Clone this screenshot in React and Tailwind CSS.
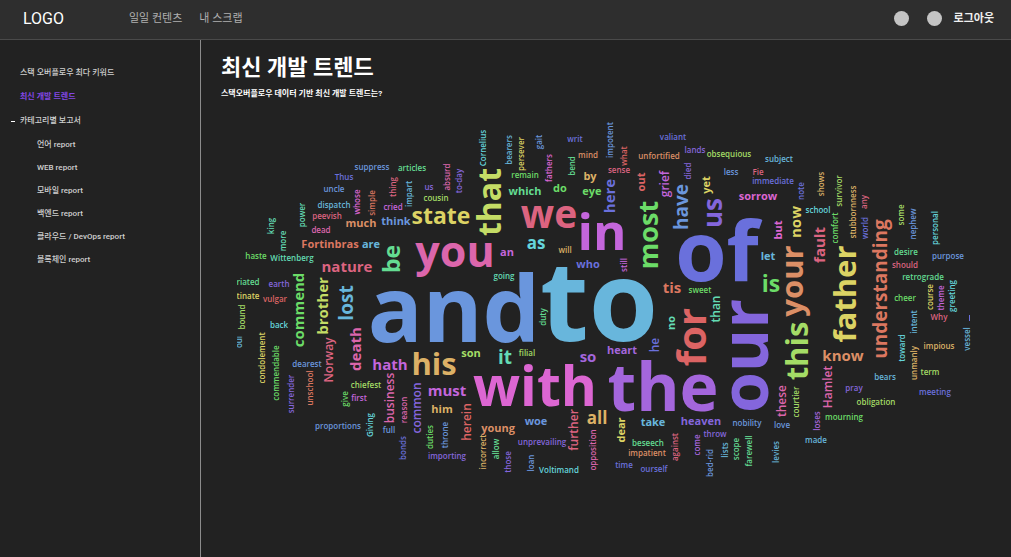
import React from 'react';

const reports = ['언어 report', 'WEB report', '모바일 report', '백엔드 report', '클라우드 / DevOps report', '블록체인 report'];

const blue = '#6a96dd';
const sky = '#68b6dc';
const cyan = '#65d5dc';
const teal = '#64dcb4';
const mint = '#64dc92';
const green = '#6cdc68';
const lime = '#a4dc66';
const yellow = '#dcd364';
const gold = '#dcb166';
const orange = '#dc8f66';
const coral = '#dc7760';
const red = '#dc6464';
const rose = '#dc6480';
const pink = '#dc66ac';
const magenta = '#dc66d2';
const orchid = '#c466dc';
const purple = '#a466dc';
const violet = '#8466dc';
const indigo = '#6a70dc';

// [word, centre x, baseline y, size, colour]
const horizontal = [
  ['and', 454, 342, 91, blue],
  ['to', 599, 341, 112, sky],
  ['of', 717, 281, 83, indigo],
  ['the', 663, 411, 66, purple],
  ['with', 535, 406, 55, magenta],
  ['you', 455, 267, 43, pink],
  ['we', 549, 228, 39, rose],
  ['in', 602, 250, 51, orchid],
  ['his', 434, 375, 31, gold],
  ['state', 441, 224, 23, yellow],
  ['nature', 347, 272, 15, rose],
  ['hath', 390, 370, 15, orchid],
  ['must', 447, 396, 15, orchid],
  ['know', 843, 361, 15, orange],
  ['as', 536, 249, 17, cyan],
  ['it', 505, 364, 19, teal],
  ['so', 588, 362, 15, purple],
  ['all', 597, 424, 17, gold],
  ['is', 771, 292, 23, green],
  ['tis', 672, 293, 15, coral],
  ['Fortinbras', 330, 248, 11, coral],
  ['are', 371, 248, 11, sky],
  ['much', 361, 227, 11, orange],
  ['think', 396, 225, 11, blue],
  ['an', 507, 256, 11, orchid],
  ['who', 588, 268, 11, indigo],
  ['which', 525, 195, 11, mint],
  ['do', 560, 192, 11, green],
  ['by', 590, 180, 11, gold],
  ['eye', 592, 195, 11, green],
  ['him', 442, 413, 11, gold],
  ['son', 471, 357, 11, lime],
  ['heart', 622, 354, 11, purple],
  ['woe', 536, 425, 11, blue],
  ['young', 498, 432, 11, orange],
  ['take', 653, 426, 11, sky],
  ['heaven', 701, 425, 11, violet],
  ['let', 768, 260, 11, sky],
  ['sorrow', 758, 200, 11, magenta],
  ['suppress', 372, 170, 8, blue],
  ['articles', 412, 171, 8, mint],
  ['Thus', 344, 180, 8, indigo],
  ['uncle', 334, 192, 8, blue],
  ['dispatch', 334, 208, 8, sky],
  ['peevish', 327, 219, 8, rose],
  ['dead', 321, 233, 8, pink],
  ['cried', 393, 210, 8, orchid],
  ['us', 429, 190, 8, violet],
  ['cousin', 436, 201, 8, lime],
  ['haste', 256, 259, 8, green],
  ['Wittenberg', 292, 261, 8, teal],
  ['riated', 248, 285, 8, mint],
  ['earth', 279, 287, 8, violet],
  ['tinate', 248, 299, 8, yellow],
  ['vulgar', 275, 302, 8, red],
  ['back', 279, 328, 8, cyan],
  ['dearest', 307, 367, 8, blue],
  ['chiefest', 366, 388, 8, lime],
  ['first', 359, 401, 8, orchid],
  ['proportions', 338, 429, 8, blue],
  ['full', 389, 433, 8, blue],
  ['importing', 447, 459, 8, violet],
  ['unprevailing', 542, 445, 8, violet],
  ['Voltimand', 559, 473, 8, cyan],
  ['filial', 527, 356, 8, lime],
  ['going', 504, 279, 8, teal],
  ['will', 565, 253, 8, gold],
  ['remain', 525, 178, 8, green],
  ['writ', 575, 142, 8, indigo],
  ['mind', 588, 158, 8, orange],
  ['sense', 619, 173, 8, rose],
  ['valiant', 673, 140, 8, indigo],
  ['lands', 695, 153, 8, violet],
  ['unfortified', 659, 159, 8, orange],
  ['obsequious', 729, 157, 8, lime],
  ['less', 731, 175, 8, blue],
  ['Fie', 758, 175, 8, rose],
  ['subject', 779, 162, 8, sky],
  ['immediate', 773, 184, 8, indigo],
  ['sweet', 700, 293, 8, green],
  ['school', 818, 213, 8, cyan],
  ['desire', 906, 255, 8, mint],
  ['should', 905, 268, 8, rose],
  ['purpose', 948, 259, 8, blue],
  ['retrograde', 923, 280, 8, mint],
  ['cheer', 905, 301, 8, green],
  ['Why', 939, 320, 8, rose],
  ['impious', 939, 349, 8, gold],
  ['bears', 885, 380, 8, sky],
  ['term', 930, 375, 8, lime],
  ['meeting', 935, 395, 8, indigo],
  ['pray', 854, 391, 8, violet],
  ['obligation', 876, 405, 8, lime],
  ['mourning', 844, 420, 8, green],
  ['made', 816, 443, 8, sky],
  ['nobility', 747, 426, 8, blue],
  ['love', 782, 428, 8, blue],
  ['throw', 715, 437, 8, violet],
  ['beseech', 648, 446, 8, mint],
  ['impatient', 647, 456, 8, orange],
  ['time', 624, 468, 8, indigo],
  ['ourself', 654, 472, 8, indigo],
];

// Words that read upwards: [word, baseline x, centre y, size, colour]
const vertical = [
  ['our', 768, 356, 66, violet],
  ['for', 706, 337, 40, red],
  ['that', 501, 202, 32, '#c4dc66'],
  ['most', 658, 235, 27, green],
  ['have', 688, 207, 19, blue],
  ['here', 615, 196, 15, indigo],
  ['us', 722, 213, 26, violet],
  ['your', 803, 281, 31, orange],
  ['father', 856, 294, 31, yellow],
  ['understanding', 887, 289, 19, coral],
  ['this', 808, 351, 31, lime],
  ['fault', 825, 245, 15, rose],
  ['now', 801, 222, 15, yellow],
  ['brother', 328, 306, 15, '#c4dc66'],
  ['commend', 304, 310, 15, green],
  ['lost', 353, 303, 19, sky],
  ['be', 400, 259, 23, mint],
  ['death', 361, 349, 15, pink],
  ['Norway', 333, 360, 12, rose],
  ['but', 782, 230, 11, magenta],
  ['these', 786, 401, 12, pink],
  ['Hamlet', 832, 387, 12, pink],
  ['than', 720, 309, 12, teal],
  ['no', 675, 323, 11, teal],
  ['he', 659, 345, 12, indigo],
  ['dear', 625, 430, 11, yellow],
  ['further', 578, 430, 12, rose],
  ['herein', 471, 422, 12, red],
  ['common', 421, 408, 12, violet],
  ['business', 394, 398, 12, pink],
  ['out', 645, 182, 11, red],
  ['grief', 669, 184, 12, orchid],
  ['yet', 710, 185, 11, yellow],
  ['king', 274, 226, 8, teal],
  ['more', 286, 241, 8, teal],
  ['power', 305, 215, 8, teal],
  ['whose', 360, 202, 8, magenta],
  ['simple', 375, 203, 8, coral],
  ['thing', 396, 187, 8, rose],
  ['impart', 412, 194, 8, sky],
  ['absurd', 450, 177, 8, pink],
  ['to-day', 462, 181, 8, violet],
  ['Cornelius', 486, 148, 8, cyan],
  ['bearers', 512, 150, 8, sky],
  ['persever', 524, 154, 8, yellow],
  ['gait', 542, 142, 8, blue],
  ['fathers', 552, 168, 8, magenta],
  ['bend', 575, 166, 8, mint],
  ['impotent', 613, 140, 8, blue],
  ['what', 627, 156, 8, red],
  ['died', 691, 171, 8, violet],
  ['still', 627, 265, 8, orchid],
  ['duty', 546, 317, 8, mint],
  ['bound', 245, 317, 8, lime],
  ['oui', 242, 342, 8, sky],
  ['condolement', 265, 358, 8, yellow],
  ['commendable', 279, 373, 8, green],
  ['surrender', 294, 394, 8, violet],
  ['unschool', 313, 388, 8, coral],
  ['give', 348, 399, 8, green],
  ['Giving', 373, 425, 8, cyan],
  ['reason', 407, 410, 8, pink],
  ['bonds', 406, 448, 8, indigo],
  ['duties', 433, 437, 8, green],
  ['throne', 448, 435, 8, blue],
  ['incorrect', 486, 452, 8, gold],
  ['allow', 499, 449, 8, mint],
  ['those', 511, 462, 8, violet],
  ['loan', 534, 463, 8, blue],
  ['opposition', 596, 450, 8, pink],
  ['against', 678, 447, 8, rose],
  ['come', 700, 445, 8, purple],
  ['bed-rid', 713, 463, 8, blue],
  ['lists', 728, 450, 8, sky],
  ['scope', 739, 449, 8, mint],
  ['farewell', 752, 451, 8, mint],
  ['levies', 779, 452, 8, sky],
  ['courtier', 799, 402, 8, lime],
  ['loses', 820, 421, 8, purple],
  ['note', 804, 191, 8, indigo],
  ['shows', 824, 184, 8, gold],
  ['survivor', 842, 191, 8, lime],
  ['comfort', 838, 228, 8, green],
  ['stubbornness', 856, 212, 8, gold],
  ['any', 867, 202, 8, rose],
  ['world', 868, 228, 8, indigo],
  ['some', 904, 215, 8, lime],
  ['nephew', 916, 224, 8, blue],
  ['personal', 938, 228, 8, cyan],
  ['course', 933, 297, 8, yellow],
  ['theme', 944, 298, 8, orchid],
  ['greeting', 955, 296, 8, cyan],
  ['intent', 917, 322, 8, sky],
  ['toward', 905, 348, 8, cyan],
  ['unmanly', 917, 363, 8, gold],
  ['vessel', 970, 339, 8, sky],
];

const weight = (size) => (size === 8 || size === 12 ? 'font-semibold' : 'font-bold');

function Header() {
  return (
    <header className="flex h-10 shrink-0 items-center border-b border-[#4a4a4a] bg-[#2e2e2e] pb-0.5 pl-[23px] pr-[17px]">
      <a href="#" className="w-[106px] text-base text-white">LOGO</a>
      <nav className="flex gap-[17px] pt-0.5 text-[11px] text-[#b0b0b0]">
        <a href="#">일일 컨텐츠</a>
        <a href="#">내 스크랩</a>
      </nav>
      <div className="ml-auto flex items-center">
        <button aria-label="알림" className="mr-[18px] size-[15px] rounded-full bg-[#c4c4c4]" />
        <button aria-label="프로필" className="mr-3 size-[15px] rounded-full bg-[#c4c4c4]" />
        <button className="pt-0.5 text-[11px] font-bold text-[#f0f0f0]">로그아웃</button>
      </div>
    </header>
  );
}

function Sidebar() {
  return (
    <aside className="w-[201px] shrink-0 border-r border-[#8c8c8c] pt-[21px] text-[8px] font-medium text-[#d0d0d0]">
      <ul>
        <li className="flex h-6 items-center pl-5"><a href="#">스택 오버플로우 최다 키워드</a></li>
        <li className="flex h-6 items-center pl-5 font-bold text-[#8247e5]"><a href="#" aria-current="page">최신 개발 트렌드</a></li>
        <li>
          <button aria-expanded="true" className="flex h-6 items-center gap-[5px] pl-[11px]">
            <span className="h-px w-1 bg-white" />
            카테고리별 보고서
          </button>
          <ul>
            {reports.map((name) => (
              <li key={name} className="flex h-[23px] items-center pl-[37px]"><a href="#">{name}</a></li>
            ))}
          </ul>
        </li>
      </ul>
    </aside>
  );
}

function WordCloud() {
  return (
    <svg viewBox="237 110 734 380" role="img" aria-label="최신 개발 트렌드 워드 클라우드" className="block w-full font-['Open_Sans','Noto_Sans',sans-serif]">
      {horizontal.map(([word, x, y, size, color]) => (
        <text key={word + x} x={x} y={y} fontSize={size} fill={color} textAnchor="middle" className={weight(size)}>{word}</text>
      ))}
      {vertical.map(([word, x, y, size, color]) => (
        <text key={word + x} transform={`translate(${x} ${y}) rotate(-90)`} fontSize={size} fill={color} textAnchor="middle" className={weight(size)}>{word}</text>
      ))}
      <rect x="969" y="315" width="1" height="6" fill={indigo} />
    </svg>
  );
}

export default function App() {
  return (
    <div className="flex min-h-screen flex-col bg-[#222222] font-[Roboto,'Noto_Sans_CJK_KR',sans-serif]">
      <Header />
      <div className="flex grow">
        <Sidebar />
        <main className="min-w-0 grow text-white">
          <div className="px-5 pt-3">
            <h1 className="text-[22px] font-bold leading-8">최신 개발 트렌드</h1>
            <p className="mt-1 text-[8px] font-bold leading-3">스택오버플로우 데이터 기반 최신 개발 트렌드는?</p>
          </div>
          <div className="pl-9 pr-10 pt-[10px]">
            <WordCloud />
          </div>
        </main>
      </div>
    </div>
  );
}
